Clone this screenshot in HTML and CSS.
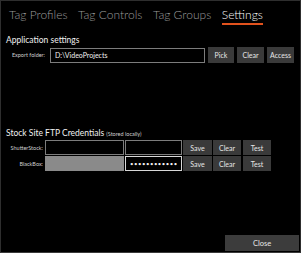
FILE: index.html
```html
<!DOCTYPE html>
<html>

<head>
    <meta charset="UTF-8">
    <title>Settings</title>
    <link rel="stylesheet" href="styles.css">
</head>

<body>
    <div class="window">
        <nav class="tabs">
            <span class="tab">Tag Profiles</span>
            <span class="tab">Tag Controls</span>
            <span class="tab">Tag Groups</span>
            <span class="tab active">Settings</span>
        </nav>

        <!-- Application settings -->
        <h2 class="section-title">Application settings</h2>
        <div class="folder-row">
            <label class="folder-label" for="export-folder">Export folder:</label>
            <input type="text" id="export-folder" class="textbox folder-box" value="D:\VideoProjects">
            <button class="btn btn-pick">Pick</button>
            <button class="btn btn-clear">Clear</button>
            <button class="btn btn-access">Access</button>
        </div>

        <!-- FTP credentials -->
        <h2 class="section-title ftp-title">Stock Site FTP Credentials <span class="note">(Stored locally)</span></h2>
        <div class="cred-row first">
            <label class="cred-label">ShutterStock:</label>
            <input type="text" class="textbox user-box">
            <input type="password" class="textbox pass-box">
            <button class="btn btn-save">Save</button>
            <button class="btn btn-clear2">Clear</button>
            <button class="btn btn-test">Test</button>
        </div>
        <div class="cred-row">
            <label class="cred-label">BlackBox:</label>
            <input type="text" class="textbox user-box filled">
            <input type="password" class="textbox pass-box focused" value="••••••••••••">
            <button class="btn btn-save">Save</button>
            <button class="btn btn-clear2">Clear</button>
            <button class="btn btn-test">Test</button>
        </div>

        <div class="footer">
            <button class="btn btn-close">Close</button>
        </div>
    </div>
</body>

</html>
```

FILE: styles.css
```css
/* Page */
body {
    margin: 0;
    background-color: #000;
    font-family: Lato, "Open Sans", sans-serif;
    color: #e8e8e8;
}

.window {
    box-sizing: border-box;
    width: 301px;
    height: 253px;
    border: 1px solid #2e2e2e;
    border-bottom-color: #3a3a3a;
    display: flex;
    flex-direction: column;
}

/* Tabs */
.tabs {
    display: flex;
    gap: 10.5px;
    padding: 6px 0 0 8px;
    white-space: nowrap;
}

.tab {
    font-size: 12px;
    font-weight: 300;
    color: #9a9a9a;
    line-height: 16px;
    padding-bottom: 0;
    border-bottom: 2px solid transparent;
}

.tab.active {
    color: #fff;
    border-bottom-color: #e2521d;
}

/* Section titles */
.section-title {
    margin: 9px 0 0 5px;
    font-size: 8.5px;
    font-weight: 400;
    line-height: 12px;
    color: #f0f0f0;
    white-space: nowrap;
}

.ftp-title {
    margin-top: 64px;
}

.note {
    font-size: 5.5px;
    color: #cfcfcf;
}

/* Inputs and buttons */
.textbox {
    box-sizing: border-box;
    height: 15px;
    margin: 0;
    padding: 0 4px;
    background-color: #000;
    border: 1px solid #7c7c7c;
    color: #f0f0f0;
    font-family: inherit;
    font-size: 7px;
    outline: none;
}

.btn {
    box-sizing: border-box;
    height: 16px;
    margin: 0;
    padding: 0;
    border: none;
    background-color: #3a3a3a;
    color: #e6e6e6;
    font-family: inherit;
    font-size: 7px;
}

/* Export folder row */
.folder-row {
    display: flex;
    align-items: center;
    margin-top: 1px;
}

.folder-label {
    width: 44px;
    text-align: right;
    font-size: 5.5px;
    color: #cfcfcf;
    margin-right: 5px;
}

.folder-box {
    width: 155px;
    margin-right: 3px;
}

.btn-pick {
    width: 26px;
    margin-right: 3px;
}

.btn-clear {
    width: 27px;
    margin-right: 3px;
}

.btn-access {
    width: 27px;
}

/* Credential rows */
.cred-row {
    display: flex;
    align-items: center;
    margin-top: 1px;
}

.cred-row.first {
    margin-top: 0;
}

.cred-label {
    width: 42px;
    text-align: right;
    font-size: 5.5px;
    color: #cfcfcf;
    margin-right: 2px;
}

.user-box {
    width: 79px;
    margin-right: 1px;
}

.user-box.filled {
    background-color: #8a8a8a;
    border-color: #8a8a8a;
}

.pass-box {
    width: 57px;
    margin-right: 1px;
    font-size: 6px;
    letter-spacing: 0.5px;
}

.pass-box.focused {
    border-color: #d8d8d8;
}

.btn-save {
    width: 29px;
    height: 15px;
    margin-right: 1px;
}

.btn-clear2 {
    width: 28px;
    height: 15px;
    margin-right: 2px;
}

.btn-test {
    width: 28px;
    height: 15px;
}

/* Footer */
.footer {
    margin-top: auto;
    display: flex;
    justify-content: flex-end;
    padding: 0 1px 1px 0;
}

.btn-close {
    width: 74px;
    height: 16px;
    font-size: 7.5px;
    background-color: #3c3c3c;
}
```
